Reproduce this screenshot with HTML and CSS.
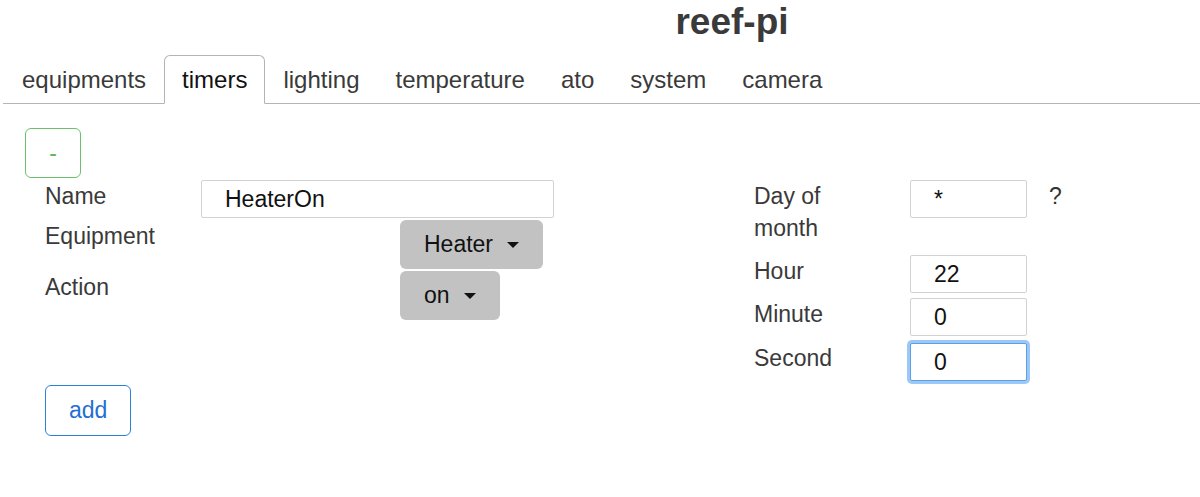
FILE: index.html
```html
<!DOCTYPE html>
<html lang="en">
  <head>
    <meta charset="UTF-8" />
    <meta name="viewport" content="width=device-width, initial-scale=1.0" />
    <title>reef-pi</title>
    <link rel="stylesheet" href="styles.css">
  </head>
  <body>
    <h1 class="title">reef-pi</h1>

    <ul class="tabs">
      <li class="tab">equipments</li>
      <li class="tab active">timers</li>
      <li class="tab">lighting</li>
      <li class="tab">temperature</li>
      <li class="tab">ato</li>
      <li class="tab">system</li>
      <li class="tab">camera</li>
    </ul>

    <div class="content">
      <button class="btn btn-toggle">-</button>

      <div class="timer-form">
        <div class="left-col">
          <label class="label">Name</label>
          <input class="field name-field" type="text" value="HeaterOn" />

          <label class="label">Equipment</label>
          <div class="select-cell">
            <button class="dropdown">Heater<span class="caret"></span></button>
          </div>

          <label class="label">Action</label>
          <div class="select-cell">
            <button class="dropdown">on<span class="caret"></span></button>
          </div>
        </div>

        <div class="right-col">
          <label class="label day-label">Day of month</label>
          <input class="field small-field" type="text" value="*" />
          <span class="help">?</span>

          <label class="label">Hour</label>
          <input class="field small-field" type="text" value="22" />
          <span></span>

          <label class="label">Minute</label>
          <input class="field small-field" type="text" value="0" />
          <span></span>

          <label class="label">Second</label>
          <input class="field small-field focused" type="text" value="0" />
          <span></span>
        </div>
      </div>

      <button class="btn btn-add">add</button>
    </div>
  </body>
</html>
```

FILE: styles.css
```css
body {
  font-family: "Liberation Sans", Arial, sans-serif;
  font-size: 23px;
  margin: 0;
  color: #3a3a3a;
  background: #fff;
}

.title {
  margin: 0 0 11px;
  padding-left: 264px;
  text-align: center;
  font-size: 37px;
  line-height: 44px;
  font-weight: bold;
  color: #3a3a3a;
}

/* tab bar */
.tabs {
  list-style: none;
  display: flex;
  margin: 0 0 0 3px;
  padding: 0;
  border-bottom: 1px solid #b4b4b4;
}

.tab {
  font-size: 24px;
  line-height: 33px;
  padding: 7px 17px;
  border: 1px solid transparent;
  border-radius: 6px 6px 0 0;
  margin-bottom: -1px;
  color: #3a3a3a;
}

.tab:first-child {
  padding-left: 18px;
}

.tab.active {
  color: #111;
  background: #fff;
  border-color: #b4b4b4 #b4b4b4 #fff;
}

.content {
  padding: 24px 0 0 25px;
}

.btn {
  font-family: inherit;
  font-size: 23px;
  background: #fff;
  border-radius: 6px;
  cursor: pointer;
  box-sizing: border-box;
}

.btn-toggle {
  display: block;
  width: 56px;
  height: 50px;
  border: 1px solid #6cc06c;
  color: #5cb85c;
  padding: 0;
}

.btn-add {
  display: block;
  margin: 0 0 0 20px;
  height: 51px;
  padding: 0 23px;
  border: 1px solid #2a7fdc;
  color: #1f6fd4;
}

/* the form */
.timer-form {
  display: flex;
  margin-top: 2px;
  padding-left: 20px;
}

.left-col {
  width: 709px;
  display: grid;
  grid-template-columns: 156px 553px;
  grid-template-rows: 40px 51px 50px;
  align-items: start;
}

.right-col {
  display: grid;
  grid-template-columns: 156px 117px auto;
  grid-template-rows: 75px 43px 44px 43px;
  align-items: start;
}

.label {
  line-height: 32px;
  color: #3a3a3a;
}

.day-label {
  padding-right: 40px;
}

.field {
  font-family: inherit;
  font-size: 23px;
  color: #111;
  height: 38px;
  box-sizing: border-box;
  border: 1px solid #d2d2d2;
  border-radius: 2px;
  padding: 0 23px;
  margin: 0;
  outline: none;
}

.name-field {
  width: 353px;
}

.small-field {
  width: 117px;
}

.field.focused {
  margin-top: 1px;
  border-color: #5b9fe8;
  box-shadow: 0 0 0 3px #9cc8f7;
}

.help {
  line-height: 32px;
  padding-left: 22px;
  color: #333;
}

.select-cell {
  padding-left: 199px;
}

.dropdown {
  font-family: inherit;
  font-size: 23px;
  color: #111;
  background: #c2c2c2;
  border: none;
  border-radius: 6px;
  height: 49px;
  padding: 0 24px;
  display: flex;
  align-items: center;
}

.caret {
  display: inline-block;
  margin-left: 14px;
  border-top: 6px solid #111;
  border-left: 6.5px solid transparent;
  border-right: 6.5px solid transparent;
}
```
